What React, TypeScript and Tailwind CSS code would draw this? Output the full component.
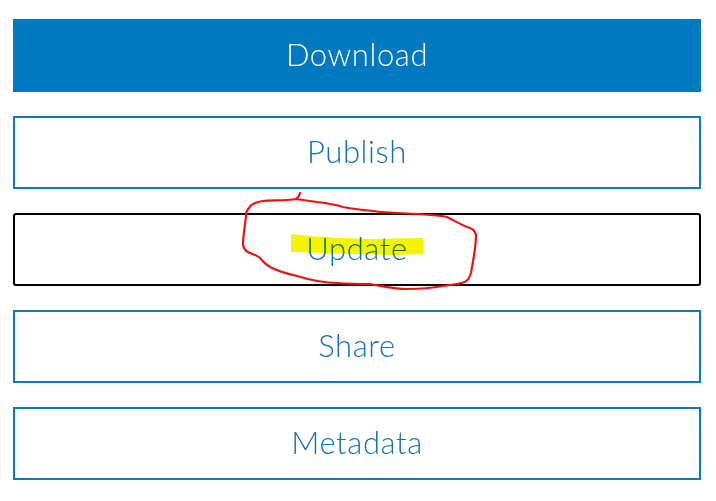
// App.tsx — stacked action buttons with a hand-drawn markup over "Update"

const ACTIONS = ["Publish", "Update", "Share", "Metadata"] as const;

function ActionButton({ label }: { label: string }) {
  const focused = label === "Update";
  return (
    <button
      className={
        focused
          ? "h-[73px] w-full rounded-[3px] border-2 border-black bg-white pb-[3px] text-[31px] font-light tracking-[0.6px] text-[#1470b0]"
          : "h-[73px] w-full border-2 border-[#0f78b8] bg-white pb-[3px] text-[31px] font-light tracking-[0.6px] text-[#1470b0]"
      }
    >
      {label}
    </button>
  );
}

export default function App() {
  return (
    <div className="relative h-[501px] w-[716px] overflow-hidden bg-white font-['Lato','Noto_Sans',sans-serif]">
      <div className="flex flex-col gap-6 pl-[13px] pr-[15px] pt-[19px]">
        <button className="h-[73px] w-full bg-[#0079c1] pb-[3px] text-[31px] font-light tracking-[0.6px] text-white">
          Download
        </button>
        {ACTIONS.map((label) => (
          <ActionButton key={label} label={label} />
        ))}
      </div>

      {/* 손으로 그린 표시: 노란 형광펜 + 빨간 동그라미 */}
      <svg
        className="pointer-events-none absolute left-0 top-0 mix-blend-multiply"
        width="716"
        height="501"
        viewBox="0 0 716 501"
        fill="none"
      >
        <path
          d="M291 234L310 236L340 238L370 239L423 238L423 254L395 255L360 254L330 253L291 252Z"
          fill="#f4f400"
        />
      </svg>
      <svg
        className="pointer-events-none absolute left-0 top-0"
        width="716"
        height="501"
        viewBox="0 0 716 501"
        fill="none"
      >
        <path
          d="M300 193C299 196 298 198 296 199C285 201 272 200 263 201C256 202 251 204 249 208C247 210 246 213 246 216C245 226 243 236 243 245C244 250 247 252 250 253C255 255 258 256 260 258C264 263 268 266 272 268C280 272 288 274 297 276C310 280 323 283 337 283C350 284 360 284 370 284C382 286 394 289 407 289C420 289 432 288 443 286C452 285 460 284 465 282C469 280 470 276 471 273C473 260 476 248 476 235C475 231 473 229 470 228C463 226 455 221 447 217C438 215 428 215 417 214C402 213 388 213 373 211C362 210 352 209 343 207C334 204 326 203 317 202C310 201 303 200 296 199"
          stroke="#ee1111"
          strokeWidth="2.2"
          strokeLinecap="round"
          strokeLinejoin="round"
        />
      </svg>
    </div>
  );
}
